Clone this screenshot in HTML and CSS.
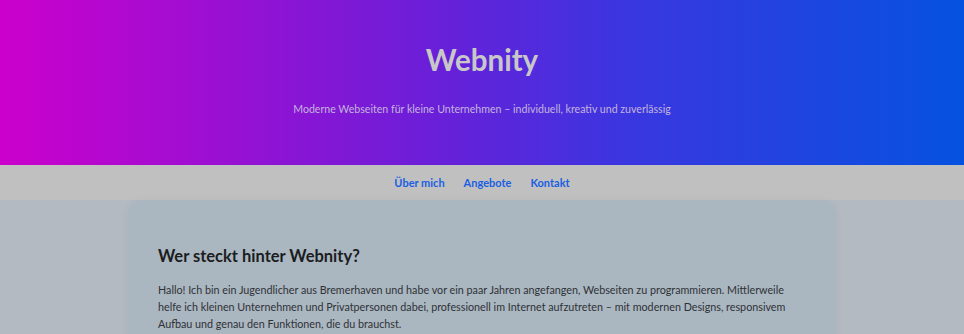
FILE: index.html
```html
<!DOCTYPE html>
<html lang="de">
<head>
    <meta charset="UTF-8">
    <meta name="viewport" content="width=device-width, initial-scale=1.0">
    <title>Webnity</title>
    <link rel="stylesheet" href="styles.css">
</head>
<body>
    <header class="hero">
        <h1>Webnity</h1>
        <p class="tagline">Moderne Webseiten für kleine Unternehmen – individuell, kreativ und zuverlässig</p>
    </header>

    <nav class="main-nav">
        <a href="#about">Über mich</a>
        <a href="#angebote">Angebote</a>
        <a href="#kontakt">Kontakt</a>
    </nav>

    <main>
        <!-- Über mich -->
        <section id="about" class="card">
            <h2>Wer steckt hinter Webnity?</h2>
            <p>Hallo! Ich bin ein Jugendlicher aus Bremerhaven und habe vor ein paar Jahren angefangen, Webseiten zu programmieren. Mittlerweile helfe ich kleinen Unternehmen und Privatpersonen dabei, professionell im Internet aufzutreten – mit modernen Designs, responsivem Aufbau und genau den Funktionen, die du brauchst.</p>
        </section>
    </main>
</body>
</html>
```

FILE: styles.css
```css
body {
    margin: 0;
    font-family: 'Segoe UI', Lato, Arial, sans-serif;
    background: #b4bac2;
    color: #2a2e33;
}
.hero {
    height: 165px;
    box-sizing: border-box;
    padding-top: 40px;
    text-align: center;
    background: linear-gradient(90deg, #cc00cc 0%, #6a1fd8 45%, #3a36e0 65%, #0552e0 100%);
}
.hero h1 {
    margin: 0;
    font-size: 29.5px;
    line-height: 40px;
    color: #c8c8c8;
}
.tagline {
    margin: 20px 0 0;
    font-size: 10.6px;
    line-height: 18px;
    color: #c4b4dc;
}
.main-nav {
    height: 35px;
    display: flex;
    justify-content: center;
    align-items: center;
    gap: 19px;
    background: #c0c0c0;
}
.main-nav a {
    color: #1a5fe0;
    font-weight: bold;
    font-size: 11px;
    text-decoration: none;
}
.card {
    max-width: 648px;
    margin: 0 auto;
    padding: 30px 29px 20px;
    background: #aab6c0;
    border-radius: 12px;
    box-shadow: 0 2px 10px rgba(0, 0, 0, 0.06);
}
.card h2 {
    margin: 14px 0 13px;
    font-size: 16.5px;
    line-height: 24px;
    color: #1b1d20;
}
.card p {
    margin: 0;
    font-size: 10.75px;
    line-height: 17px;
    color: #2e3236;
}
```
